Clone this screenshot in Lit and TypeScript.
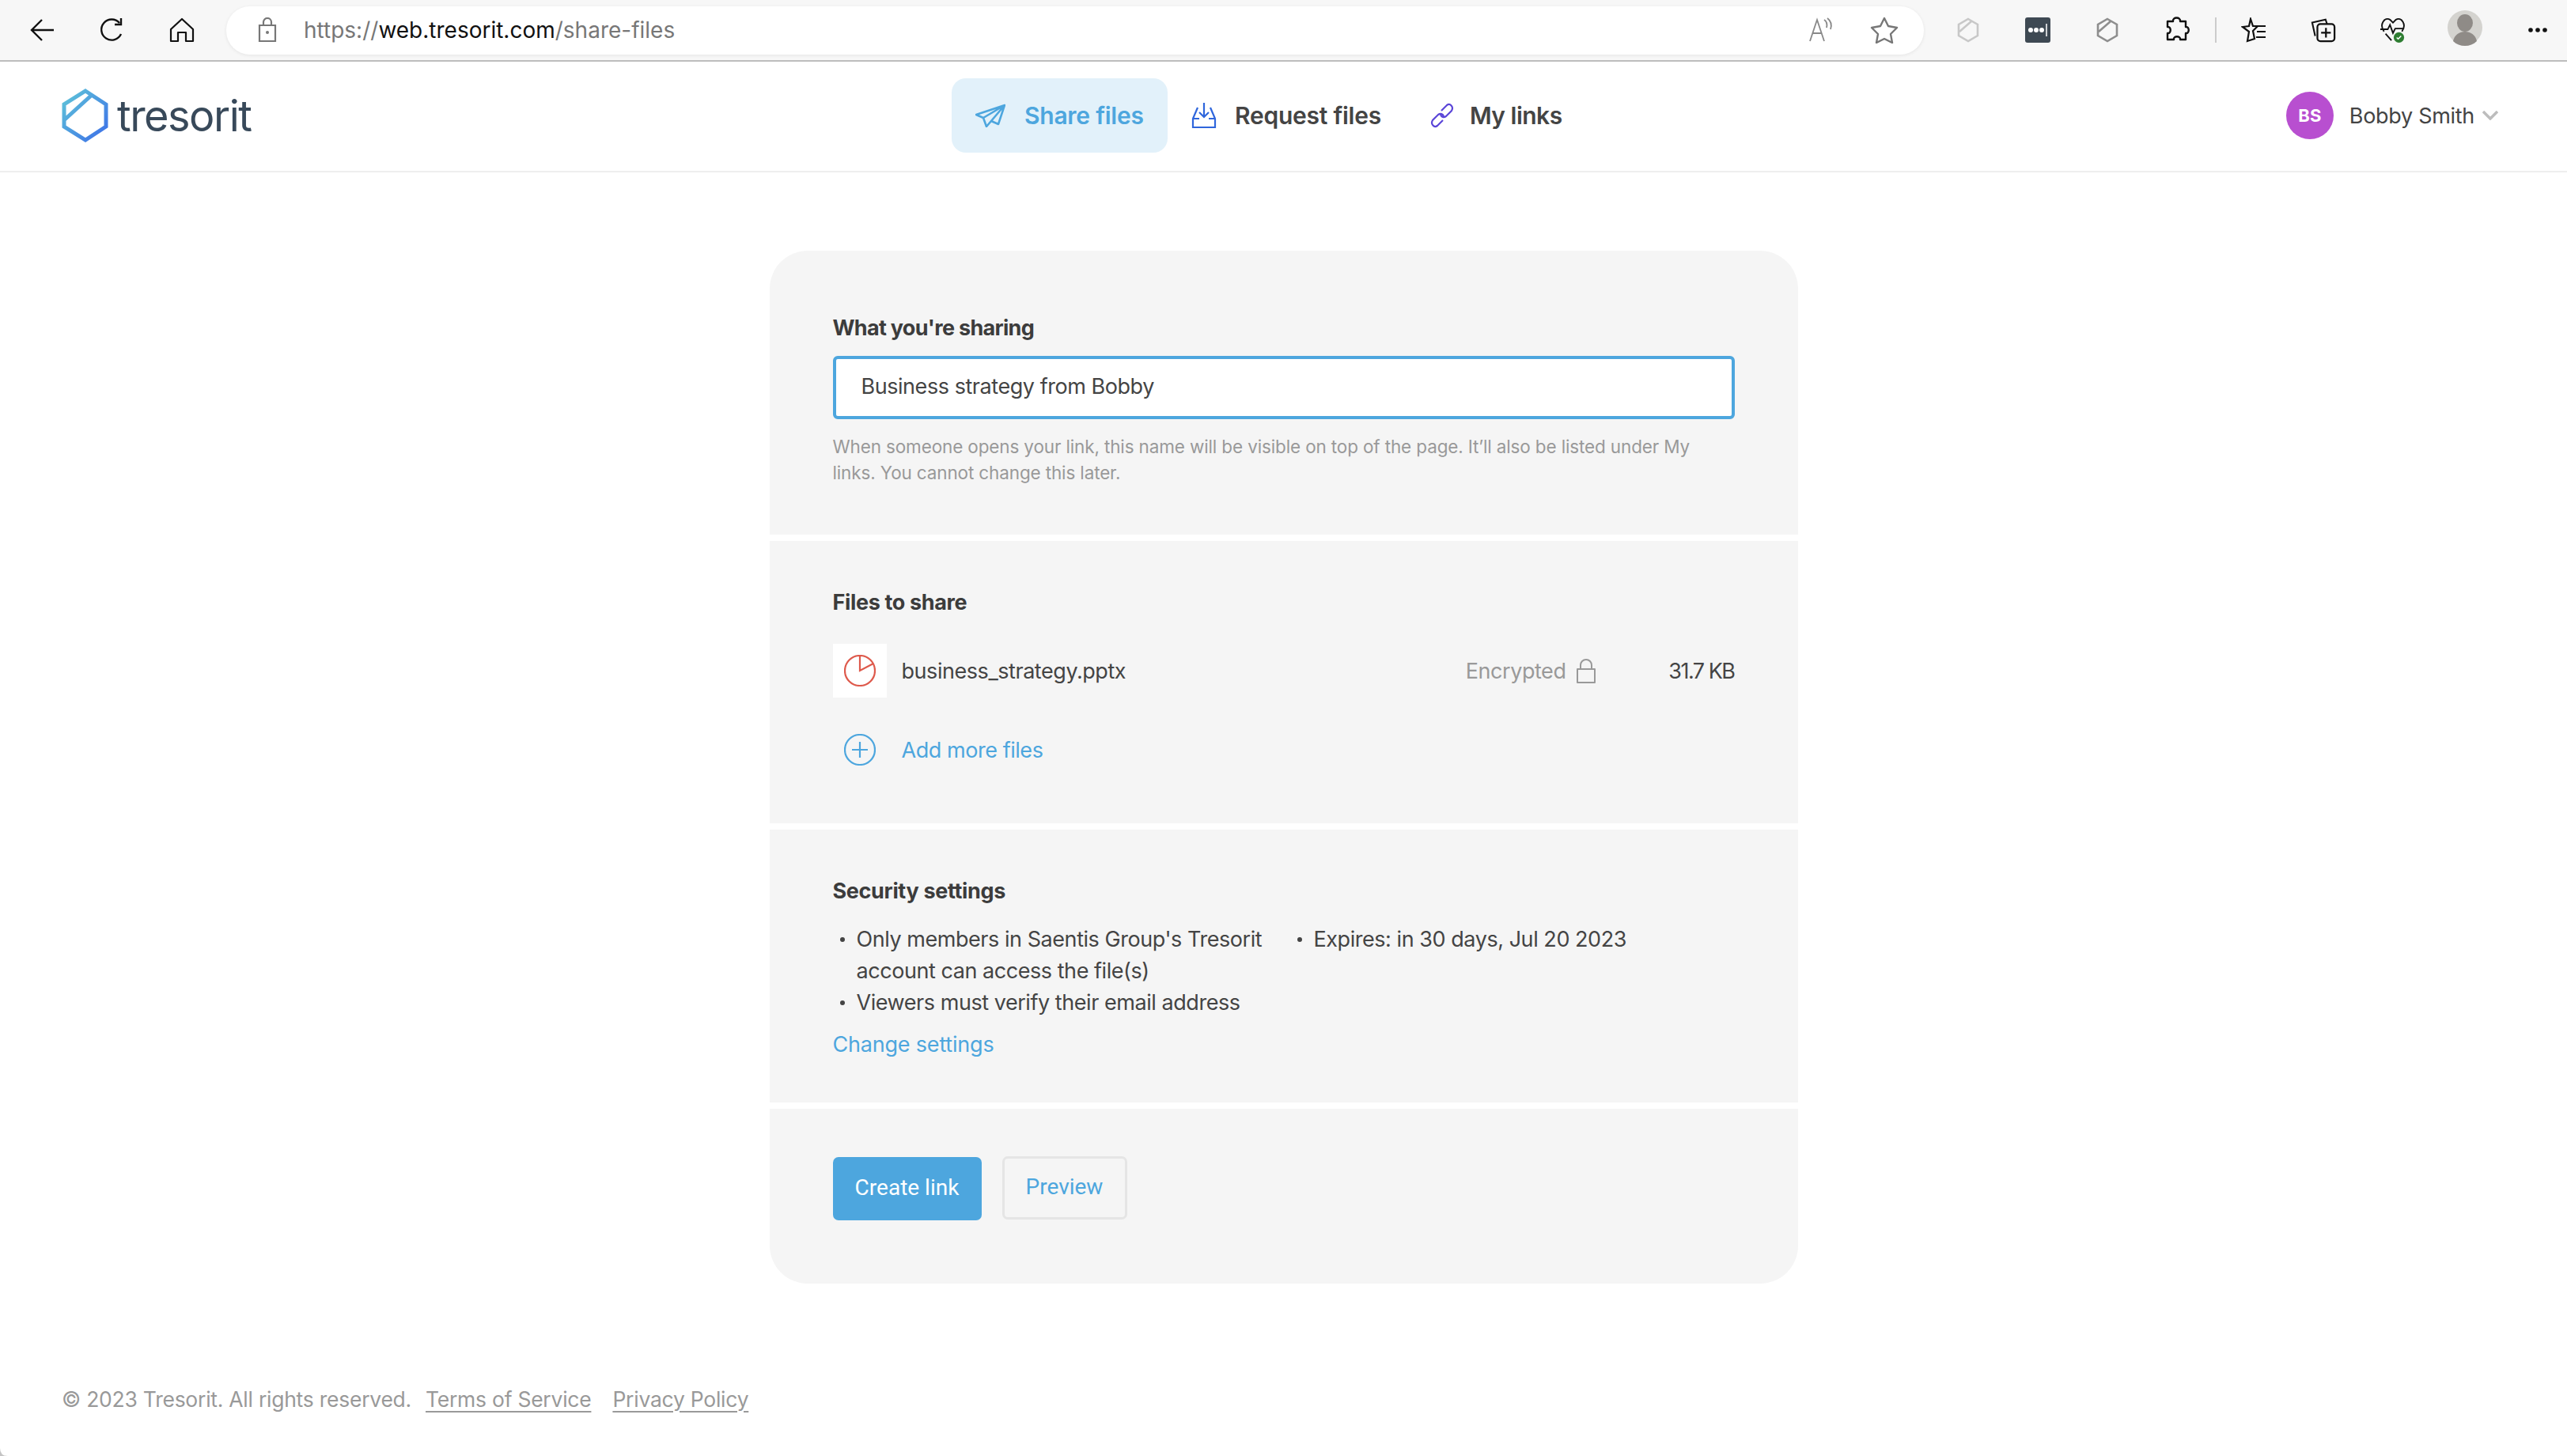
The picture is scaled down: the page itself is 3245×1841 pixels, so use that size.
import { LitElement, html, css, svg } from "lit";
import { customElement } from "lit/decorators.js";

const i = (w: number, h: number, body: unknown, cls = "") => html`<svg class=${cls} width=${w} height=${h} viewBox="0 0 ${w} ${h}" fill="none">${body}</svg>`;

const hexLogo = html`<svg class="hex" width="60" height="68" viewBox="0 0 60 68" fill="none">
  <defs><linearGradient id="lg" x1="0" y1="0" x2="1" y2="1"><stop offset="0" stop-color="#5fc6d8"/><stop offset="1" stop-color="#3c6fe8"/></linearGradient></defs>
  <path d="M30 3 56 20V48L30 65 3 48V20Z M37 9 4 39" stroke="url(#lg)" stroke-width="5" stroke-linejoin="miter"/>
</svg>`;

const hexExt = (c: string) => i(32, 32, svg`<path d="M16 2 28 9V23L16 30 4 23V9Z M20 5 5 18" stroke=${c} stroke-width="2.6"/>`);

@customElement("app-root")
export class AppRoot extends LitElement {
  static styles = css`
    :host { display: block; width: 3245px; height: 1841px; position: relative; overflow: hidden; background: #fff;
      font-family: Inter, "Liberation Sans", sans-serif; color: #444; font-size: 27px; letter-spacing: -.45px; }
    a { text-decoration: none; }
    .chrome { height: 76px; background: #f7f7f7; border-bottom: 2px solid #bdbdbd; display: flex; align-items: center; padding-left: 38px; letter-spacing: 0; }
    .tools { display: flex; gap: 56px; align-items: center; }
    .tools svg { display: block; }
    .pill { width: 2146px; height: 61px; margin: 0 40px; background: #fff; border-radius: 30px; box-shadow: 0 1px 4px rgba(0,0,0,.08);
      display: flex; align-items: center; padding: 0 32px 0 40px; box-sizing: border-box; font-family: Inter, sans-serif; font-size: 28px; color: #777; }
    .pill b { font-weight: 400; color: #111; }
    .pill .lock { margin-right: 34px; }
    .pill .rt { margin-left: auto; display: flex; gap: 46px; align-items: center; }
    .ext { display: flex; align-items: center; }
    .ext > * { flex: none; }
    .ext .g { width: 32px; height: 46px; display: flex; align-items: center; justify-content: center; margin-right: 56px; }
    .ext .g.n { margin-right: 32px; }
    .ext .g.h { margin-right: 53px; }
    .divi { width: 2px; height: 32px; background: #ccc; margin-right: 31px; }
    .ext .av { margin-right: 58px; }

    .nav { height: 136px; padding-bottom: 2px; border-bottom: 2px solid #eee; display: grid; grid-template-columns: 1125px auto 1fr; align-items: center; padding-left: 78px; }
    .logo { display: flex; align-items: center; gap: 10px; font-family: Inter, sans-serif; font-size: 54px; color: #38495a; font-weight: 400; letter-spacing: -1.5px; }
    .links { display: flex; align-items: center; font-weight: 600; font-size: 30px; letter-spacing: -.25px; }
    .lk { display: flex; align-items: center; height: 94px; gap: 24px; padding: 0 30px; box-sizing: border-box; white-space: nowrap; color: #444; }
    .lk.on { background: #e2f1fa; color: #4da6de; border-radius: 18px; width: 273px; padding: 0 30px; }
    .lk.b { padding: 0 0 0 30px; gap: 23px; }
    .lk.c { padding: 0 0 0 62px; gap: 20px; letter-spacing: -.5px; }
    .user { justify-self: end; display: flex; align-items: center; margin-right: 87px; letter-spacing: -.3px; }
    .avt { width: 60px; height: 60px; border-radius: 50%; background: #b84fd0; color: #fff; font-weight: 700; font-size: 22px; letter-spacing: 0; display: flex; align-items: center; justify-content: center; margin-right: 20px; }
    .user svg { margin-left: 10px; }

    .card { width: 1300px; margin: 99px auto 0; display: flex; flex-direction: column; gap: 8px; }
    .sec { background: #f5f5f5; padding: 0 80px; box-sizing: border-box; }
    .s1 { height: 359px; border-radius: 48px 48px 0 0; padding-top: 81px; }
    .s2 { height: 357px; padding-top: 61px; }
    .s3 { height: 345px; padding-top: 61px; }
    .s4 { height: 221px; border-radius: 0 0 48px 48px; padding-top: 61px; display: flex; align-items: flex-start; gap: 26px; }
    h2 { margin: 0; font-size: 27px; line-height: 34px; font-weight: 700; color: #3c3c3c; letter-spacing: -.35px; }
    h2.tight { letter-spacing: -.7px; }
    .input { margin-top: 18px; height: 80px; border: 4px solid #4da6de; border-radius: 6px; background: #fff; box-sizing: border-box; display: flex; align-items: center; padding: 0 0 3px 32px; }
    .hint { margin: 18px 0 0; font-size: 22.5px; line-height: 33px; color: #999; letter-spacing: -.14px; }
    .row { display: flex; align-items: center; height: 68px; margin-top: 35px; }
    .fico { width: 68px; height: 68px; background: #fff; display: flex; align-items: center; justify-content: center; margin-right: 19px; }
    .fname { flex: 1; }
    .enc { color: #999; display: flex; align-items: center; gap: 13px; }
    .size { width: 85px; margin-left: 91px; white-space: nowrap; text-align: right; letter-spacing: -1.5px; }
    .add { display: flex; align-items: center; height: 40px; margin-top: 46px; color: #4da6de; padding-left: 14px; gap: 33px; }
    .cols { display: grid; grid-template-columns: 578px 1fr; margin-top: 24px; }
    ul { margin: 0; padding: 0 0 0 30px; list-style: none; line-height: 40px; }
    li { position: relative; }
    li::before { content: ""; position: absolute; left: -21px; top: 17px; width: 6px; height: 6px; border-radius: 50%; background: #444; }
    .chg { display: block; margin-top: 13px; line-height: 40px; color: #4da6de; letter-spacing: -.2px; }
    .btn { height: 80px; display: flex; align-items: center; justify-content: center; box-sizing: border-box; border-radius: 7px; font-family: Roboto, sans-serif; font-size: 28px; letter-spacing: 0; padding-bottom: 3px; }
    .pri { width: 188px; background: #4da6de; color: #fff; }
    .sec-b { width: 158px; border: 3px solid #e5e5e5; color: #4da6de; margin-top: -1px; }
    .foot { position: absolute; left: 78px; top: 1750px; line-height: 38px; font-size: 26.5px; color: #999; display: flex; letter-spacing: -.25px; }
    .foot a { color: #999; text-decoration: underline; text-underline-offset: 5px; margin-left: 27px; }
    .foot a:first-of-type { margin-left: 18px; }
    .corner { position: absolute; left: 0; bottom: 0; display: block; }
  `;

  render() {
    return html`
      <div class="chrome">
        <div class="tools">
          ${i(32, 32, svg`<path d="M30 16H3M15 3 2 16l13 13" stroke="#111" stroke-width="2.4"/>`)}
          ${i(32, 32, svg`<path d="M27 21A13 13 0 1 1 25 7M27 1v8h-8" stroke="#111" stroke-width="2.4"/>`)}
          ${i(32, 32, svg`<path d="M16 2 2 15v15h9V19h10v11h9V15Z" stroke="#111" stroke-width="2.2" stroke-linejoin="round"/>`)}
        </div>
        <div class="pill">
          ${i(24, 32, svg`<path d="M7 10V6a5 5 0 0 1 10 0v4M2 10h20v20H2Z" stroke="#777" stroke-width="2.2"/><circle cx="12" cy="19" r="2" fill="#777"/>`, "lock")}
          <span>https://<b>web.tresorit.com</b>/share-files</span>
          <div class="rt">
            ${i(32, 32, svg`<path d="M2 30 11 3l9 27M5 20h12M20 3c3 2 4 6 3 10M24 1c4 3 6 8 4 14" stroke="#888" stroke-width="1.8"/>`)}
            ${i(36, 34, svg`<path d="m18 2 5 10 11 2-8 8 2 11-10-5-10 5 2-11-8-8 11-2Z" stroke="#777" stroke-width="2.4" stroke-linejoin="round"/>`)}
          </div>
        </div>
        <div class="ext">
          <div class="g">${hexExt("#c8c8c8")}</div>
          <div class="g">${i(32, 32, svg`<rect width="32" height="32" rx="3" fill="#3e4953"/><circle cx="7" cy="16" r="3" fill="#fff"/><circle cx="14" cy="16" r="3" fill="#fff"/><circle cx="21" cy="16" r="3" fill="#fff"/><path d="M27 8v16" stroke="#fff" stroke-width="1.5"/>`)}</div>
          <div class="g">${hexExt("#8e8e8e")}</div>
          <div class="g n">${i(32, 34, svg`<path d="M4 6h7c-1-6 10-6 9 0h7v7c5-1 5 9 0 8v8h-7c1-5-9-5-8 0H4v-8c5 1 5-9 0-8Z" stroke="#111" stroke-width="2.4" stroke-linejoin="round"/>`)}</div>
          <div class="divi"></div>
          <div class="g">${i(32, 32, svg`<path d="M12 2l3 9h6l-6 6 2 10-9 3 2-12-8-6 8-1Z M21 11h10M20 18h11M19 25h12" stroke="#111" stroke-width="2.2"/>`)}</div>
          <div class="g">${i(34, 32, svg`<path d="M6 24 2 6l18-4 2 6" stroke="#111" stroke-width="2.2"/><rect x="9" y="8" width="23" height="23" rx="4" stroke="#111" stroke-width="2.4"/><path d="M20.500 13v13M14 19.500h13" stroke="#111" stroke-width="2.4"/>`)}</div>
          <div class="g h">${i(34, 36, svg`<path d="M5 20C-2 10 6 0 13 4l4 4 4-4c7-4 15 6 8 16M0 17h10l3-6 4 11 3-6h12M7 23l8 9" stroke="#111" stroke-width="2"/><circle cx="25" cy="28" r="7" fill="#2e7d32"/><path d="m22 28 2 2 4-4" stroke="#fff" stroke-width="1.6"/>`)}</div>
          <div class="av">${i(44, 46, svg`<circle cx="22" cy="23" r="22" fill="#d4d3cf"/><ellipse cx="22" cy="17" rx="10" ry="11" fill="#8f8b87"/><path d="M7 40c3-16 27-16 30 0-8 8-22 8-30 0Z" fill="#8f8b87"/>`)}</div>
          ${i(24, 6, svg`<circle cx="3" cy="3" r="2.800" fill="#111"/><circle cx="12" cy="3" r="2.800" fill="#111"/><circle cx="21" cy="3" r="2.800" fill="#111"/>`)}
        </div>
      </div>

      <header class="nav">
        <div class="logo">${hexLogo}<span>tresorit</span></div>
        <nav class="links">
          <a class="lk on">${i(38, 30, svg`<path d="M37 2 1 14l9 4 4 11 6-7 9 4ZM37 2 10 18M37 2 14 29" stroke="#4da6de" stroke-width="2.6" stroke-linejoin="round"/>`)}Share files</a>
          <a class="lk b">${i(32, 34, svg`<path d="M8 7 2 21v11h28V21L24 7M2 21h8M22 21h8M16 1v18m-6-6 6 6 6-6" stroke="#2f66dc" stroke-width="2.2"/>`)}Request files</a>
          <a class="lk c">${i(30, 32, svg`<path d="M14 10 21 3c4-3 9 2 6 7l-7 7c-3 2-6 1-7-2M16 22l-7 7c-4 3-9-2-6-7l7-7c3-2 6-1 7 2" stroke="#5b46d8" stroke-width="2.2"/>`)}My links</a>
        </nav>
        <div class="user">
          <div class="avt">BS</div><span>Bobby Smith</span>
          ${i(20, 12, svg`<path d="M1 1 10 10 19 1" stroke="#bdbdbd" stroke-width="3.500"/>`)}
        </div>
      </header>

      <main class="card">
        <section class="sec s1">
          <h2 class="tight">What you're sharing</h2>
          <div class="input">Business strategy from Bobby</div>
          <p class="hint">When someone opens your link, this name will be visible on top of the page. It’ll also be listed under My<br>links. You cannot change this later.</p>
        </section>
        <section class="sec s2">
          <h2>Files to share</h2>
          <div class="row">
            <div class="fico">${i(40, 40, svg`<circle cx="20" cy="20" r="19" stroke="#de5a4c" stroke-width="2.200"/><path d="M20 1v19l17-9" stroke="#de5a4c" stroke-width="2.200"/>`)}</div>
            <div class="fname">business_strategy.pptx</div>
            <div class="enc">Encrypted ${i(24, 31, svg`<path d="M5 12V8a7 7 0 0 1 14 0v4M1 13h22v17H1Z" stroke="#999" stroke-width="2" stroke-linejoin="round"/>`)}</div>
            <div class="size">31.7 KB</div>
          </div>
          <a class="add">${i(40, 40, svg`<circle cx="20" cy="20" r="19" stroke="#4da6de" stroke-width="2.200"/><path d="M20 10v20M10 20h20" stroke="#4da6de" stroke-width="2.200"/>`)}Add more files</a>
        </section>
        <section class="sec s3">
          <h2>Security settings</h2>
          <div class="cols">
            <ul><li>Only members in Saentis Group's Tresorit account can access the file(s)</li><li>Viewers must verify their email address</li></ul>
            <ul><li>Expires: in 30 days, Jul 20 2023</li></ul>
          </div>
          <a class="chg">Change settings</a>
        </section>
        <section class="sec s4">
          <a class="btn pri">Create link</a>
          <a class="btn sec-b">Preview</a>
        </section>
      </main>

      <footer class="foot">© 2023 Tresorit. All rights reserved.<a>Terms of Service</a><a>Privacy Policy</a></footer>
      ${i(10, 10, svg`<path d="M0 0Q0 10 10 10H0Z" fill="#c4c4c4"/>`, "corner")}
    `;
  }
}
